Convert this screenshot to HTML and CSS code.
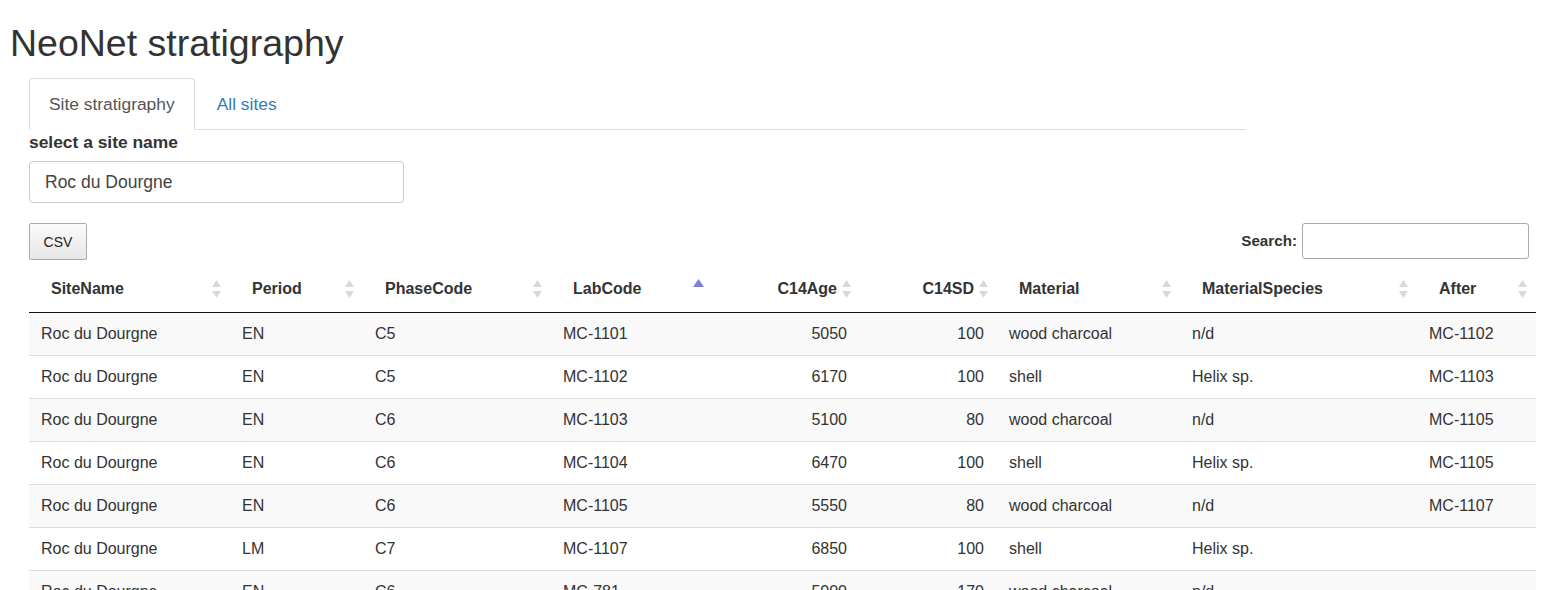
FILE: index.html
```html
<!DOCTYPE html>
<html>
<head>
<meta charset="utf-8">
<title>NeoNet stratigraphy</title>
<link rel="stylesheet" href="styles.css">
</head>
<body>
<h1 class="page-title">NeoNet stratigraphy</h1>
<div class="main">
  <ul class="nav-tabs">
    <li class="tab active"><a>Site stratigraphy</a></li>
    <li class="tab"><a>All sites</a></li>
  </ul>
  <div class="tab-content">
    <div class="form-group">
      <label class="control-label">select a site name</label>
      <div class="select-input">Roc du Dourgne</div>
    </div>
    <div class="dt-controls">
      <button class="dt-button">CSV</button>
      <div class="dt-filter">
        <label class="filter-label">Search:</label>
        <input class="filter-input" type="search">
      </div>
    </div>
    <table class="data-table">
      <colgroup>
        <col style="width:201px"><col style="width:133px"><col style="width:188px"><col style="width:161px"><col style="width:148px"><col style="width:137px"><col style="width:183px"><col style="width:237px"><col style="width:119px">
      </colgroup>
      <thead>
        <tr>
          <th>SiteName<span class="sort-both"><svg width="9" height="18" viewBox="0 0 9 18"><polygon points="4.5,0 9,7 0,7"/><polygon points="0,11 9,11 4.5,18"/></svg></span></th>
          <th>Period<span class="sort-both"><svg width="9" height="18" viewBox="0 0 9 18"><polygon points="4.5,0 9,7 0,7"/><polygon points="0,11 9,11 4.5,18"/></svg></span></th>
          <th>PhaseCode<span class="sort-both"><svg width="9" height="18" viewBox="0 0 9 18"><polygon points="4.5,0 9,7 0,7"/><polygon points="0,11 9,11 4.5,18"/></svg></span></th>
          <th>LabCode<span class="sort-asc"><svg width="11" height="8" viewBox="0 0 11 8"><polygon points="5.5,0 11,8 0,8"/></svg></span></th>
          <th class="num">C14Age<span class="sort-both"><svg width="9" height="18" viewBox="0 0 9 18"><polygon points="4.5,0 9,7 0,7"/><polygon points="0,11 9,11 4.5,18"/></svg></span></th>
          <th class="num">C14SD<span class="sort-both"><svg width="9" height="18" viewBox="0 0 9 18"><polygon points="4.5,0 9,7 0,7"/><polygon points="0,11 9,11 4.5,18"/></svg></span></th>
          <th>Material<span class="sort-both"><svg width="9" height="18" viewBox="0 0 9 18"><polygon points="4.5,0 9,7 0,7"/><polygon points="0,11 9,11 4.5,18"/></svg></span></th>
          <th>MaterialSpecies<span class="sort-both"><svg width="9" height="18" viewBox="0 0 9 18"><polygon points="4.5,0 9,7 0,7"/><polygon points="0,11 9,11 4.5,18"/></svg></span></th>
          <th>After<span class="sort-both"><svg width="9" height="18" viewBox="0 0 9 18"><polygon points="4.5,0 9,7 0,7"/><polygon points="0,11 9,11 4.5,18"/></svg></span></th>
        </tr>
      </thead>
      <tbody>
        <tr><td>Roc du Dourgne</td><td>EN</td><td>C5</td><td>MC-1101</td><td class="num">5050</td><td class="num">100</td><td>wood charcoal</td><td>n/d</td><td>MC-1102</td></tr>
        <tr><td>Roc du Dourgne</td><td>EN</td><td>C5</td><td>MC-1102</td><td class="num">6170</td><td class="num">100</td><td>shell</td><td>Helix sp.</td><td>MC-1103</td></tr>
        <tr><td>Roc du Dourgne</td><td>EN</td><td>C6</td><td>MC-1103</td><td class="num">5100</td><td class="num">80</td><td>wood charcoal</td><td>n/d</td><td>MC-1105</td></tr>
        <tr><td>Roc du Dourgne</td><td>EN</td><td>C6</td><td>MC-1104</td><td class="num">6470</td><td class="num">100</td><td>shell</td><td>Helix sp.</td><td>MC-1105</td></tr>
        <tr><td>Roc du Dourgne</td><td>EN</td><td>C6</td><td>MC-1105</td><td class="num">5550</td><td class="num">80</td><td>wood charcoal</td><td>n/d</td><td>MC-1107</td></tr>
        <tr><td>Roc du Dourgne</td><td>LM</td><td>C7</td><td>MC-1107</td><td class="num">6850</td><td class="num">100</td><td>shell</td><td>Helix sp.</td><td></td></tr>
        <tr><td>Roc du Dourgne</td><td>EN</td><td>C6</td><td>MC-781</td><td class="num">5000</td><td class="num">170</td><td>wood charcoal</td><td>n/d</td><td></td></tr>
      </tbody>
    </table>
  </div>
</div>
</body>
</html>
```

FILE: styles.css
```css
html, body {
  margin: 0;
  padding: 0;
  background: #fff;
}
body {
  font-family: "Liberation Sans", Arial, sans-serif;
  font-size: 16px;
  line-height: 22px;
  color: #333;
  overflow: hidden;
}
.page-title {
  font-size: 37.5px;
  font-weight: 500;
  line-height: 40px;
  margin: 23px 0 15px 10px;
  color: #333;
}
.main {
  padding-left: 29px;
  width: 1507px;
}
.nav-tabs {
  list-style: none;
  margin: 0;
  padding: 0;
  width: 1217px;
  display: flex;
  border-bottom: 1px solid #ddd;
}
.tab {
  margin-bottom: -1px;
}
.tab a {
  display: block;
  padding: 14px 19px;
  margin-right: 2px;
  font-size: 17.4px;
  line-height: 22px;
  border: 1px solid transparent;
  border-radius: 4px 4px 0 0;
  color: #337ab7;
}
.tab.active a {
  color: #555;
  background: #fff;
  border-color: #ddd;
  border-bottom-color: #fff;
}
.form-group {
  padding-top: 1px;
  margin-bottom: 20px;
}
.control-label {
  display: block;
  font-weight: bold;
  font-size: 17.4px;
  margin-bottom: 8px;
}
.select-input {
  width: 343px;
  height: 40px;
  line-height: 40px;
  padding: 0 15px;
  font-size: 17.5px;
  border: 1px solid #ccc;
  border-radius: 4px;
  color: #444;
}
.dt-controls {
  display: flex;
  justify-content: space-between;
  align-items: flex-start;
  margin-bottom: 10px;
}
.dt-button {
  font-family: "Liberation Sans", Arial, sans-serif;
  font-size: 14px;
  width: 58px;
  height: 37px;
  padding: 0;
  color: #222;
  border: 1px solid #aaa;
  border-radius: 2px;
  background: linear-gradient(to bottom, #fbfbfb 0%, #e6e6e6 100%);
}
.dt-filter {
  display: flex;
  align-items: center;
  gap: 5px;
  margin-right: 7px;
}
.filter-label {
  font-weight: bold;
  font-size: 15.2px;
}
.filter-input {
  width: 223px;
  height: 32px;
  padding: 1px;
  margin: 0;
  border: 1px solid #aaa;
  border-radius: 3px;
  box-sizing: content-box;
}
.data-table {
  border-collapse: collapse;
  table-layout: fixed;
  width: 1507px;
}
.data-table th {
  position: relative;
  text-align: left;
  font-weight: bold;
  padding: 8px 22px 12px 22px;
  line-height: 22px;
  border-bottom: 1px solid #111;
  white-space: nowrap;
}
.data-table th.num {
  text-align: right;
  padding-right: 23px;
}
.data-table td {
  padding: 10px 13px 10px 12px;
  line-height: 22px;
  height: 22px;
  border-top: 1px solid #ddd;
  white-space: nowrap;
}
.data-table tbody tr:first-child td {
  border-top: none;
}
.data-table td.num {
  text-align: right;
}
.data-table tbody tr:nth-child(odd) {
  background: #f9f9f9;
}
.sort-both {
  position: absolute;
  right: 9px;
  top: 10px;
  line-height: 0;
}
.sort-both svg {
  fill: #d9d9d9;
}
.sort-asc {
  position: absolute;
  right: 8px;
  top: 9px;
  line-height: 0;
}
.sort-asc svg {
  fill: #8080d8;
}
```
